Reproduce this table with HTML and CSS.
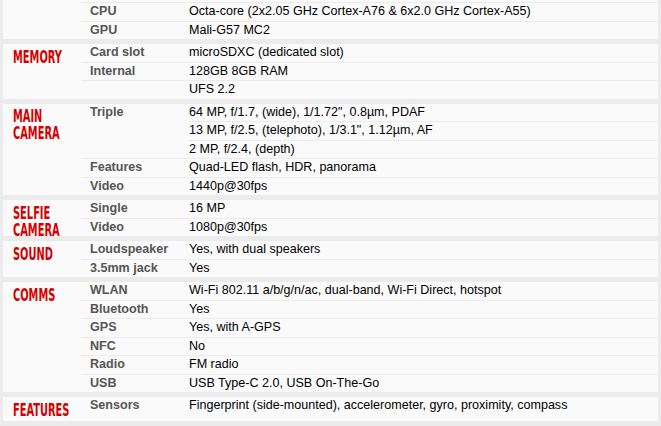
FILE: index.html
```html
<!DOCTYPE html>
<html lang="en">
<head>
<meta charset="utf-8">
<title>Specs</title>
<link rel="stylesheet" href="styles.css">
</head>
<body>
<div class="specs">
  <section class="sec">
    <h2 class="sec-title"><span>PLATFORM</span></h2>
    <div class="rows">
      <div class="row"><div class="ttl">OS</div><div class="nfo"><div class="ln">Android 11, XOS 10</div></div></div>
      <div class="row"><div class="ttl">Chipset</div><div class="nfo"><div class="ln">Mediatek Helio G96 (12 nm)</div></div></div>
      <div class="row"><div class="ttl">CPU</div><div class="nfo"><div class="ln">Octa-core (2x2.05 GHz Cortex-A76 &amp; 6x2.0 GHz Cortex-A55)</div></div></div>
      <div class="row"><div class="ttl">GPU</div><div class="nfo"><div class="ln">Mali-G57 MC2</div></div></div>
    </div>
  </section>
  <section class="sec">
    <h2 class="sec-title"><span>MEMORY</span></h2>
    <div class="rows">
      <div class="row"><div class="ttl">Card slot</div><div class="nfo"><div class="ln">microSDXC (dedicated slot)</div></div></div>
      <div class="row"><div class="ttl">Internal</div><div class="nfo"><div class="ln">128GB 8GB RAM</div></div></div>
      <div class="row"><div class="ttl"></div><div class="nfo"><div class="ln">UFS 2.2</div></div></div>
    </div>
  </section>
  <section class="sec">
    <h2 class="sec-title"><span>MAIN<br>CAMERA</span></h2>
    <div class="rows">
      <div class="row"><div class="ttl">Triple</div><div class="nfo">
        <div class="ln">64 MP, f/1.7, (wide), 1/1.72", 0.8µm, PDAF</div>
        <div class="ln">13 MP, f/2.5, (telephoto), 1/3.1", 1.12µm, AF</div>
        <div class="ln">2 MP, f/2.4, (depth)</div>
      </div></div>
      <div class="row"><div class="ttl">Features</div><div class="nfo"><div class="ln">Quad-LED flash, HDR, panorama</div></div></div>
      <div class="row"><div class="ttl">Video</div><div class="nfo"><div class="ln">1440p@30fps</div></div></div>
    </div>
  </section>
  <section class="sec">
    <h2 class="sec-title"><span>SELFIE<br>CAMERA</span></h2>
    <div class="rows">
      <div class="row"><div class="ttl">Single</div><div class="nfo"><div class="ln">16 MP</div></div></div>
      <div class="row"><div class="ttl">Video</div><div class="nfo"><div class="ln">1080p@30fps</div></div></div>
    </div>
  </section>
  <section class="sec">
    <h2 class="sec-title"><span>SOUND</span></h2>
    <div class="rows">
      <div class="row"><div class="ttl">Loudspeaker</div><div class="nfo"><div class="ln">Yes, with dual speakers</div></div></div>
      <div class="row"><div class="ttl">3.5mm jack</div><div class="nfo"><div class="ln">Yes</div></div></div>
    </div>
  </section>
  <section class="sec">
    <h2 class="sec-title"><span>COMMS</span></h2>
    <div class="rows">
      <div class="row"><div class="ttl">WLAN</div><div class="nfo"><div class="ln">Wi-Fi 802.11 a/b/g/n/ac, dual-band, Wi-Fi Direct, hotspot</div></div></div>
      <div class="row"><div class="ttl">Bluetooth</div><div class="nfo"><div class="ln">Yes</div></div></div>
      <div class="row"><div class="ttl">GPS</div><div class="nfo"><div class="ln">Yes, with A-GPS</div></div></div>
      <div class="row"><div class="ttl">NFC</div><div class="nfo"><div class="ln">No</div></div></div>
      <div class="row"><div class="ttl">Radio</div><div class="nfo"><div class="ln">FM radio</div></div></div>
      <div class="row"><div class="ttl">USB</div><div class="nfo"><div class="ln">USB Type-C 2.0, USB On-The-Go</div></div></div>
    </div>
  </section>
  <section class="sec">
    <h2 class="sec-title"><span>FEATURES</span></h2>
    <div class="rows">
      <div class="row"><div class="ttl">Sensors</div><div class="nfo"><div class="ln">Fingerprint (side-mounted), accelerometer, gyro, proximity, compass</div></div></div>
    </div>
  </section>
  <section class="sec">
    <h2 class="sec-title"><span>BATTERY</span></h2>
    <div class="rows">
      <div class="row"><div class="ttl">Type</div><div class="nfo"><div class="ln">Li-Po 5000 mAh, non-removable</div></div></div>
    </div>
  </section>
</div>
</body>
</html>
```
FILE: styles.css
```css
html, body {
  margin: 0;
  padding: 0;
}
body {
  background: #ebebeb;
  font-family: "Liberation Sans", Arial, sans-serif;
  overflow: hidden;
}
.specs {
  width: 655px;
  margin: -39px 0 0 3px;
  background: #fafafa;
}
.sec {
  display: flex;
  align-items: flex-start;
  border-top: 5px solid #ebebeb;
}
.sec-title {
  margin: 0;
  flex: none;
  width: 78px;
  height: 24px;
  box-sizing: border-box;
  padding: 4.5px 0 0 9.5px;
  color: #d50000;
  font-family: "DejaVu Sans Condensed", "DejaVu Sans", sans-serif;
  font-stretch: condensed;
  font-weight: bold;
  font-size: 17px;
  line-height: 17px;
}
.sec-title span {
  display: inline-block;
  transform: scaleX(0.645);
  transform-origin: 0 0;
  white-space: nowrap;
}
.rows {
  flex: 1;
}
.row {
  display: flex;
  border-top: 1px solid #ececec;
}
.row:first-child {
  border-top: 0;
}
.ttl {
  flex: none;
  width: 108px;
  box-sizing: border-box;
  padding-left: 9px;
  color: #555;
  font-weight: bold;
  font-size: 12.55px;
  line-height: 17.5px;
}
.nfo {
  flex: 1;
}
.ln {
  color: #000;
  font-size: 12.55px;
  line-height: 17.5px;
}
.ln + .ln {
  border-top: 1px solid #ececec;
}
```
